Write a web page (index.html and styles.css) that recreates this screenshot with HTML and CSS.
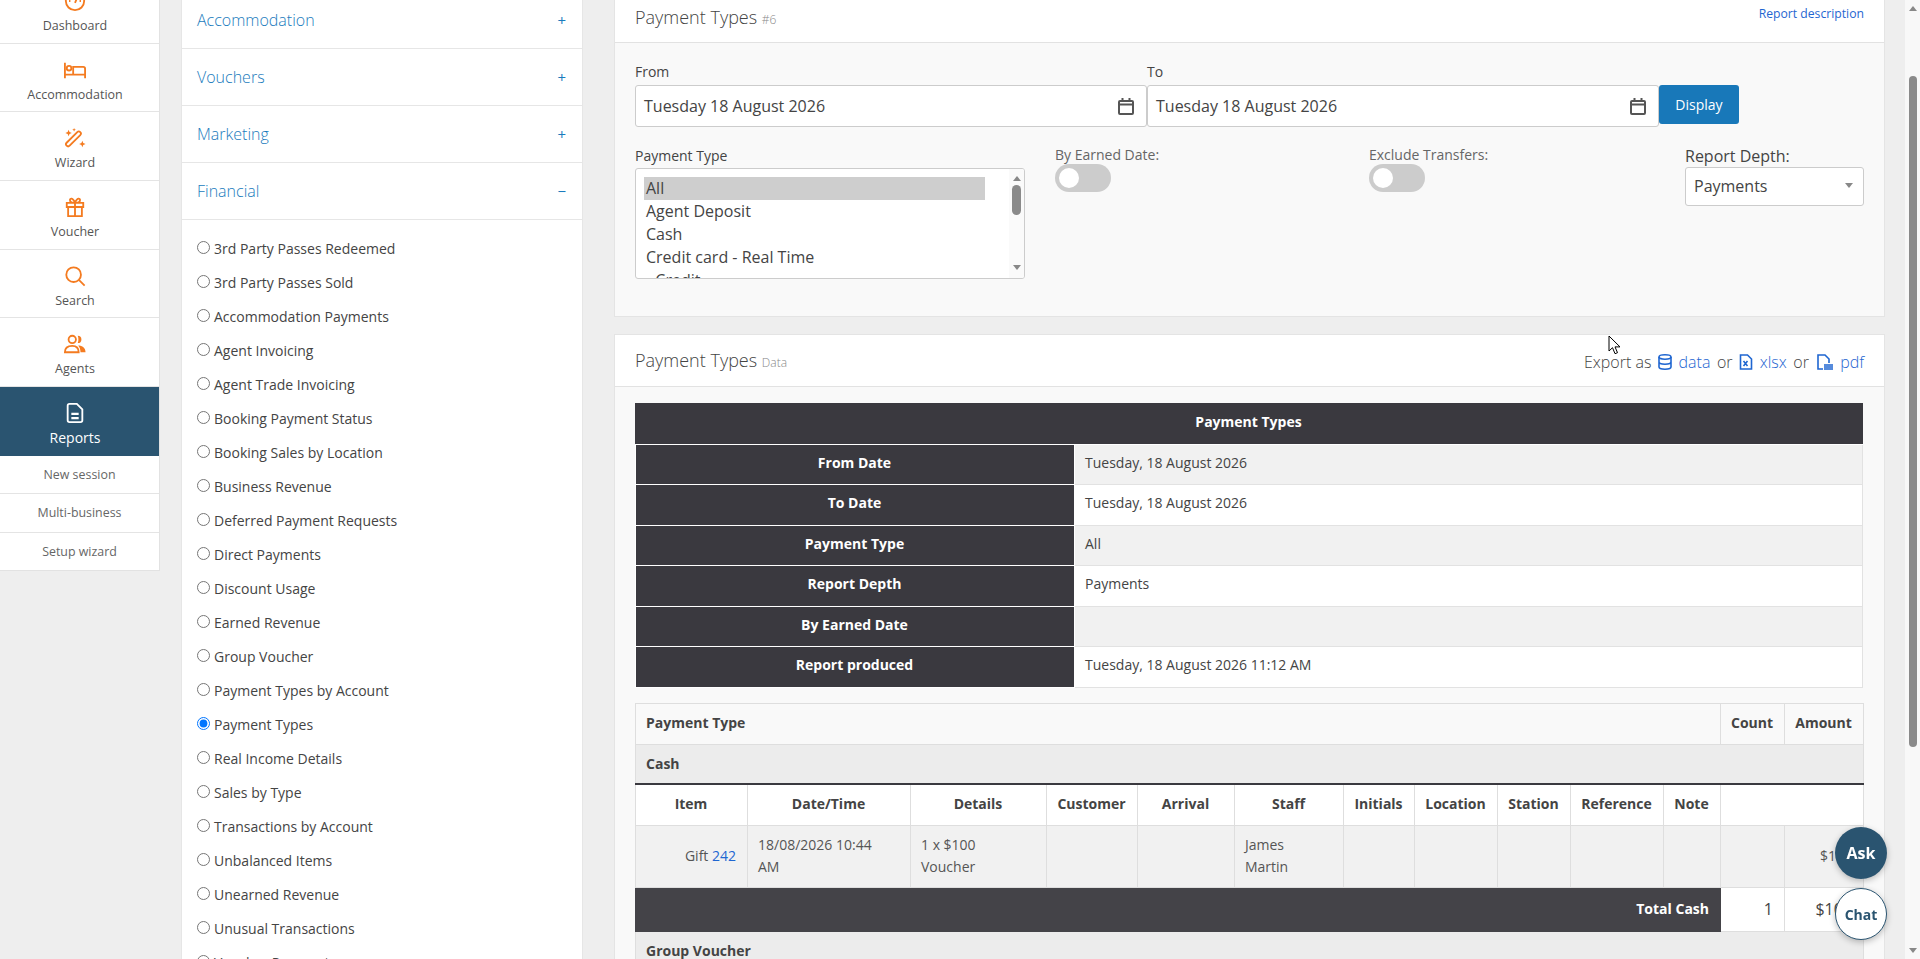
FILE: index.html
```html
<!DOCTYPE html>
<html>
  <head>
    <title>Payment Types Report</title>
    <link rel="stylesheet" href="styles.css">
  </head>
  <body>
    <div class="viewport">
      <div class="page">
        <nav class="sidebar">
          <a class="nav-item">
            <svg class="nav-icon" viewBox="0 0 24 24"><circle cx="12" cy="12" r="10"/><path d="M12 14l3-7M5.500 12h1.500M17 12h1.500"/></svg>
            <span>Dashboard</span>
          </a>
          <a class="nav-item">
            <svg class="nav-icon" viewBox="0 0 24 24"><path d="M1 4v17M1 17h22M23 21V10.500a2 2 0 0 0-2-2H10V17"/><circle cx="5.500" cy="10" r="2.500"/></svg>
            <span>Accommodation</span>
          </a>
          <a class="nav-item">
            <svg class="nav-icon" viewBox="0 0 24 24"><rect x="8" y="2.500" width="4.600" height="21" rx="2.300" transform="rotate(45 10.300 13)"/><path class="solid" d="M5 3l1 2.500 2.500 1-2.500 1L5 10 4 7.500l-2.500-1 2.500-1zM11 1l.6 1.400L13 3l-1.400.6L11 5l-.6-1.400L9 3l1.400-.6zM20 15l1 2.500 2.500 1-2.500 1-1 2.500-1-2.500-2.500-1 2.500-1z"/></svg>
            <span>Wizard</span>
          </a>
          <a class="nav-item">
            <svg class="nav-icon" viewBox="0 0 24 24"><path d="M3 7.500h18v4.500H3zM4.500 12v10h15V12M12 7.500V22M12 7.500C9 7.500 6.500 6.500 6.500 4.300 6.500 2.500 9.500 1.500 12 7.500c2.500-6 5.500-5 5.500-3.200 0 2.200-2.500 3.200-5.500 3.200z"/></svg>
            <span>Voucher</span>
          </a>
          <a class="nav-item">
            <svg class="nav-icon" viewBox="0 0 24 24"><circle cx="10.500" cy="10.500" r="8"/><path d="M16.500 16.500l6 6"/></svg>
            <span>Search</span>
          </a>
          <a class="nav-item">
            <svg class="nav-icon" viewBox="0 0 24 24"><circle cx="9" cy="7" r="4"/><path d="M1 21c0-5 3-7 8-7s7 2 7 7z"/><path class="solid" d="M15 3a4 4 0 0 1 0 8c1-2.500 1-5.500 0-8zM15.500 13.500c4.500 0 8 2.500 8 7.500h-5.500c0-3-.8-5.500-2.500-7.500z"/></svg>
            <span>Agents</span>
          </a>
          <a class="nav-item nav-active">
            <svg class="nav-icon" viewBox="0 0 24 24"><path d="M6 2h8l6 6v12a2 2 0 0 1-2 2H6a2 2 0 0 1-2-2V4a2 2 0 0 1 2-2z"/><path class="thick" d="M8 13h8M8 17.500h8"/></svg>
            <span>Reports</span>
          </a>
          <a class="nav-sub">New session</a>
          <a class="nav-sub">Multi-business</a>
          <a class="nav-sub">Setup wizard</a>
        </nav>

        <section class="report-list">
          <div class="acc-row"><span>Accommodation</span><b>+</b></div>
          <div class="acc-row"><span>Vouchers</span><b>+</b></div>
          <div class="acc-row"><span>Marketing</span><b>+</b></div>
          <div class="acc-row"><span>Financial</span><b>&minus;</b></div>
          <div class="radio-list">
            <label class="radio-row"><input type="radio" name="report">3rd Party Passes Redeemed</label>
            <label class="radio-row"><input type="radio" name="report">3rd Party Passes Sold</label>
            <label class="radio-row"><input type="radio" name="report">Accommodation Payments</label>
            <label class="radio-row"><input type="radio" name="report">Agent Invoicing</label>
            <label class="radio-row"><input type="radio" name="report">Agent Trade Invoicing</label>
            <label class="radio-row"><input type="radio" name="report">Booking Payment Status</label>
            <label class="radio-row"><input type="radio" name="report">Booking Sales by Location</label>
            <label class="radio-row"><input type="radio" name="report">Business Revenue</label>
            <label class="radio-row"><input type="radio" name="report">Deferred Payment Requests</label>
            <label class="radio-row"><input type="radio" name="report">Direct Payments</label>
            <label class="radio-row"><input type="radio" name="report">Discount Usage</label>
            <label class="radio-row"><input type="radio" name="report">Earned Revenue</label>
            <label class="radio-row"><input type="radio" name="report">Group Voucher</label>
            <label class="radio-row"><input type="radio" name="report">Payment Types by Account</label>
            <label class="radio-row"><input type="radio" name="report" checked>Payment Types</label>
            <label class="radio-row"><input type="radio" name="report">Real Income Details</label>
            <label class="radio-row"><input type="radio" name="report">Sales by Type</label>
            <label class="radio-row"><input type="radio" name="report">Transactions by Account</label>
            <label class="radio-row"><input type="radio" name="report">Unbalanced Items</label>
            <label class="radio-row"><input type="radio" name="report">Unearned Revenue</label>
            <label class="radio-row"><input type="radio" name="report">Unusual Transactions</label>
            <label class="radio-row"><input type="radio" name="report">Voucher Payments</label>
          </div>
        </section>

        <main class="main">
          <section class="card">
            <header class="card-head filter-head">
              <h3>Payment Types <small>#6</small></h3>
              <a class="desc-link">Report description</a>
            </header>
            <div class="filter-body">
              <div class="date-row">
                <div class="date-field">
                  <label>From</label>
                  <div class="date-input">
                    <span>Tuesday 18 August 2026</span>
                    <svg class="cal" viewBox="0 0 16 18"><path d="M2 4h12a1 1 0 0 1 1 1v11a1 1 0 0 1-1 1H2a1 1 0 0 1-1-1V5a1 1 0 0 1 1-1zM1 7.500h14M4.500 1v3M11.500 1v3"/></svg>
                  </div>
                </div>
                <div class="date-field">
                  <label>To</label>
                  <div class="date-input">
                    <span>Tuesday 18 August 2026</span>
                    <svg class="cal" viewBox="0 0 16 18"><path d="M2 4h12a1 1 0 0 1 1 1v11a1 1 0 0 1-1 1H2a1 1 0 0 1-1-1V5a1 1 0 0 1 1-1zM1 7.500h14M4.500 1v3M11.500 1v3"/></svg>
                  </div>
                </div>
                <button class="btn-display">Display</button>
              </div>
              <div class="option-row">
                <div>
                  <label class="list-label">Payment Type</label>
                  <div class="listbox">
                    <div class="list-options">
                      <div class="opt opt-selected">All</div>
                      <div class="opt">Agent Deposit</div>
                      <div class="opt">Cash</div>
                      <div class="opt">Credit card - Real Time</div>
                      <div class="opt">- Credit</div>
                    </div>
                    <div class="list-scroll">
                      <i class="arrow-up"></i>
                      <i class="list-thumb"></i>
                      <i class="arrow-down"></i>
                    </div>
                  </div>
                </div>
                <div>
                  <label class="switch-label">By Earned Date:</label>
                  <div class="switch"><i></i></div>
                </div>
                <div>
                  <label class="switch-label">Exclude Transfers:</label>
                  <div class="switch"><i></i></div>
                </div>
                <div>
                  <label class="depth-label">Report Depth:</label>
                  <div class="depth-select"><span>Payments</span><i class="arrow-down"></i></div>
                </div>
              </div>
            </div>
          </section>

          <section class="card card-data">
            <header class="card-head data-head">
              <h3>Payment Types <small>Data</small></h3>
              <div class="export">
                <span>Export as</span>
                <svg class="exp-icon" viewBox="0 0 14 16"><ellipse cx="7" cy="3" rx="6" ry="2.200"/><path d="M1 3v10c0 1.200 2.700 2.200 6 2.200s6-1 6-2.200V3M1 8c0 1.200 2.700 2.200 6 2.200s6-1 6-2.200"/></svg>
                <a>data</a>
                <span>or</span>
                <svg class="exp-icon" viewBox="0 0 14 16"><path d="M1.500 1h7l4 4v10h-11zM4.500 7l4 5M8.500 7l-4 5"/></svg>
                <a>xlsx</a>
                <span>or</span>
                <svg class="exp-icon exp-wide" viewBox="0 0 18 16"><path d="M7 15H2V1h7l4 4v4"/><path class="thick" d="M8 11h9M8 13h9M8 15h9"/></svg>
                <a>pdf</a>
              </div>
            </header>
            <div class="data-body">
              <table class="meta-table">
                <colgroup><col class="c-label"><col></colgroup>
                <tr><th colspan="2">Payment Types</th></tr>
                <tr><th>From Date</th><td>Tuesday, 18 August 2026</td></tr>
                <tr><th>To Date</th><td>Tuesday, 18 August 2026</td></tr>
                <tr><th>Payment Type</th><td>All</td></tr>
                <tr><th>Report Depth</th><td>Payments</td></tr>
                <tr><th>By Earned Date</th><td></td></tr>
                <tr><th>Report produced</th><td>Tuesday, 18 August 2026 11:12 AM</td></tr>
              </table>

              <table class="pay-table">
                <colgroup>
                  <col class="c-item"><col class="c-date"><col class="c-details"><col class="c-customer">
                  <col class="c-arrival"><col class="c-staff"><col class="c-initials"><col class="c-location">
                  <col class="c-station"><col class="c-reference"><col class="c-note"><col class="c-count"><col class="c-amount">
                </colgroup>
                <tr class="head-row">
                  <th colspan="11" class="left">Payment Type</th>
                  <th>Count</th>
                  <th>Amount</th>
                </tr>
                <tr class="group-row"><th colspan="13" class="left">Cash</th></tr>
                <tr class="sub-head">
                  <th>Item</th><th>Date/Time</th><th>Details</th><th>Customer</th><th>Arrival</th><th>Staff</th>
                  <th>Initials</th><th>Location</th><th>Station</th><th>Reference</th><th>Note</th><th colspan="2"></th>
                </tr>
                <tr class="data-row">
                  <td class="right">Gift <a>242</a></td>
                  <td>18/08/2026 10:44<br>AM</td>
                  <td>1 x $100<br>Voucher</td>
                  <td></td><td></td>
                  <td>James<br>Martin</td>
                  <td></td><td></td><td></td><td></td><td></td><td></td>
                  <td class="right">$100</td>
                </tr>
                <tr class="total-row">
                  <th colspan="11">Total Cash</th>
                  <td>1</td>
                  <td>$100</td>
                </tr>
                <tr class="group-row"><th colspan="13" class="left">Group Voucher</th></tr>
              </table>
            </div>
          </section>
        </main>
      </div>

      <div class="page-scroll">
        <i class="arrow-up"></i>
        <i class="page-thumb"></i>
        <i class="arrow-down"></i>
      </div>
    </div>

    <button class="float-btn float-ask">Ask</button>
    <button class="float-btn float-chat">Chat</button>
    <svg class="mouse" viewBox="0 0 13 20"><path d="M1 1v15l3.500-3.300 2.500 6 2.500-1-2.500-5.800h5z"/></svg>
  </body>
</html>
```

FILE: styles.css
```css
* {
  box-sizing: border-box;
}

html,
body {
  height: 100%;
  margin: 0;
  overflow: hidden;
}

body {
  font-family: "Open Sans", "Noto Sans", sans-serif;
  font-size: 14px;
  color: #444;
  background-color: #eee;
}

a {
  color: #1f66d1;
}

.viewport {
  display: flex;
  height: 959px;
  overflow: hidden;
}

/* page is scrolled a little, same as in the real app */
.page {
  display: flex;
  align-items: flex-start;
  flex: 1;
  min-width: 0;
  margin-top: -25px;
}

/* left nav */
.sidebar {
  flex: 0 0 160px;
  background-color: #fff;
  border-right: 1px solid #e2e2e2;
  border-bottom: 1px solid #e2e2e2;
}

.nav-item {
  display: flex;
  flex-direction: column;
  align-items: center;
  height: 68.7px;
  padding: 15px 9px 0 0;
  font-size: 12.5px;
  line-height: 18px;
  color: #555;
  border-bottom: 1px solid #e4e4e4;
}

.nav-icon {
  width: 22px;
  height: 22px;
  margin-bottom: 5px;
  fill: none;
  stroke: #f47b20;
  stroke-width: 2;
}

.nav-icon .solid {
  fill: #f47b20;
  stroke: none;
}

.nav-active {
  height: 69px;
  font-size: 14px;
  color: #fff;
  background-color: #2a5470;
  border-bottom: 0;
}

.nav-active .nav-icon {
  stroke: #fff;
}

.nav-active .thick {
  stroke-width: 2.5;
}

.nav-sub {
  display: block;
  height: 38.3px;
  font-size: 12.4px;
  line-height: 38px;
  text-align: center;
  color: #666;
  border-bottom: 1px solid #e4e4e4;
}

.nav-sub:last-child {
  height: 37px;
  line-height: 37px;
  border-bottom: 0;
}

/* report picker */
.report-list {
  flex: 0 0 402px;
  margin: 17px 0 0 21px;
  background-color: #fff;
  border-left: 1px solid #e6e6e6;
  border-right: 1px solid #e6e6e6;
}

.acc-row {
  display: flex;
  justify-content: space-between;
  align-items: center;
  height: 57px;
  padding: 0 16px 0 15px;
  font-size: 16px;
  font-weight: 300;
  color: #1a7bbd;
  border-bottom: 1px solid #e6e6e6;
}

.acc-row b {
  font-size: 15px;
  font-weight: 400;
}

.radio-list {
  padding-top: 11px;
}

.radio-row {
  display: flex;
  align-items: center;
  gap: 4px;
  height: 34px;
  padding-left: 15px;
  font-size: 14px;
}

.radio-row input {
  width: 13px;
  height: 13px;
  margin: -1px 0 0 0;
}

/* right column */
.main {
  flex: 0 0 1270px;
  margin-left: 31px;
}

.card {
  background-color: #f9f9f9;
  border: 1px solid #e4e4e4;
}

.card-data {
  margin-top: 17px;
}

.card-head {
  display: flex;
  justify-content: space-between;
  padding: 0 20px;
  background-color: #fff;
  border-bottom: 1px solid #e2e2e2;
}

.card-head h3 {
  margin: 0;
  font-size: 18px;
  font-weight: 300;
  color: #444;
}

.card-head small {
  font-size: 12px;
  color: #888;
}

.filter-head {
  height: 67px;
  padding-top: 28px;
}

.filter-head h3 {
  line-height: 26px;
}

.desc-link {
  font-size: 12.2px;
  line-height: 20px;
}

.filter-body {
  height: 273px;
  padding: 18px 20px 0;
}

.date-row {
  display: flex;
  align-items: flex-start;
}

.date-field {
  flex: 0 0 512px;
}

.date-field label {
  display: block;
  height: 24px;
  line-height: 21px;
}

.date-input {
  display: flex;
  justify-content: space-between;
  align-items: center;
  height: 42px;
  padding: 0 12px 0 8px;
  font-size: 16px;
  background-color: #fff;
  border: 1px solid #ccc;
  border-radius: 3px;
}

.cal {
  width: 16px;
  height: 18px;
  fill: none;
  stroke: #555;
  stroke-width: 2;
}

.btn-display {
  width: 80px;
  height: 39px;
  margin-top: 24px;
  padding: 0;
  font-family: inherit;
  font-size: 14px;
  color: #fff;
  background-color: #1878b9;
  border: 0;
  border-radius: 3px;
}

.option-row {
  display: grid;
  grid-template-columns: 420px 314px 316px 179px;
  margin-top: 19px;
}

.list-label {
  display: block;
  height: 22px;
  line-height: 20px;
}

.listbox {
  display: flex;
  justify-content: space-between;
  width: 390px;
  height: 111px;
  overflow: hidden;
  background-color: #fff;
  border: 1px solid #ccc;
  border-radius: 3px;
}

.list-options {
  width: 341px;
  margin: 8px 0 0 8px;
  font-size: 16px;
  line-height: 23px;
}

.opt {
  padding-left: 2px;
}

.opt-selected {
  background-color: #cecece;
}

.list-scroll {
  display: flex;
  flex-direction: column;
  align-items: center;
  width: 15px;
  padding-top: 7px;
  background-color: #fafafa;
}

.list-thumb {
  width: 9px;
  height: 30px;
  margin-top: 4px;
  background-color: #8a8a8a;
  border-radius: 5px;
}

.list-scroll .arrow-down {
  margin-top: auto;
  margin-bottom: 8px;
}

.arrow-up,
.arrow-down {
  display: block;
  width: 0;
  height: 0;
  border-left: 4px solid transparent;
  border-right: 4px solid transparent;
}

.arrow-up {
  border-bottom: 5px solid #888;
}

.arrow-down {
  border-top: 5px solid #888;
}

.switch-label {
  display: block;
  height: 18px;
  font-size: 14px;
  line-height: 18px;
  color: #666;
}

.switch {
  width: 56px;
  height: 28px;
  padding: 4px;
  background-color: #ccc;
  border-radius: 14px;
}

.switch i {
  display: block;
  width: 20px;
  height: 20px;
  background-color: #fff;
  border-radius: 50%;
}

.depth-label {
  display: block;
  height: 21px;
  font-size: 16px;
  line-height: 20px;
}

.depth-select {
  display: flex;
  justify-content: space-between;
  align-items: center;
  height: 39px;
  padding: 0 10px 2px 8px;
  font-size: 16px;
  background-color: #fff;
  border: 1px solid #ccc;
  border-radius: 3px;
}

.data-head {
  height: 52px;
  align-items: center;
}

.data-head h3 {
  margin-bottom: 2px;
}

.export {
  display: flex;
  align-items: center;
  gap: 6.6px;
  margin-top: 2px;
  font-size: 16px;
  font-weight: 300;
}

.exp-icon {
  width: 14px;
  height: 16px;
  fill: none;
  stroke: #1f66d1;
  stroke-width: 1.6;
}

.exp-wide {
  width: 18px;
}

.data-body {
  padding: 16px 20px 0;
}

/* report tables */
table {
  width: 1228px;
  border-collapse: collapse;
  table-layout: fixed;
}

.c-label { width: 439px; }

.meta-table th,
.meta-table td {
  height: 40.5px;
  padding: 0 11px 4px 10px;
  border: 1px solid #e2e2e2;
}

.meta-table th {
  color: #fff;
  background-color: #3a393f;
  border-color: #fff;
}

.meta-table tr:first-child th {
  border-color: #3a393f;
  border-bottom-color: #fff;
}

.meta-table td {
  background-color: #fff;
}

.meta-table tr:nth-child(even) td {
  background-color: #f1f1f1;
}

.pay-table {
  margin-top: 15px;
}

.c-item { width: 112px; }
.c-date { width: 163px; }
.c-details { width: 136px; }
.c-customer { width: 91px; }
.c-arrival { width: 97px; }
.c-staff { width: 109px; }
.c-initials { width: 71px; }
.c-location { width: 83px; }
.c-station { width: 73px; }
.c-reference { width: 93px; }
.c-note { width: 57px; }
.c-count { width: 64px; }
.c-amount { width: 79px; }

.pay-table th,
.pay-table td {
  padding: 0 11px 0 10px;
  border: 1px solid #dedede;
}

.pay-table .left {
  text-align: left;
}

.pay-table .right {
  text-align: right;
}

.head-row th {
  height: 41px;
  padding-bottom: 2px;
  background-color: #f9f9f9;
}

.group-row th {
  height: 40px;
  background-color: #ececec;
  border-bottom: 2px solid #3a393f;
}

.sub-head th {
  height: 41px;
  padding-bottom: 2px;
  background-color: #fff;
}

.data-row td {
  height: 62px;
  line-height: 22px;
  color: #555;
  background-color: #f1f1f1;
}

.total-row th {
  height: 44px;
  padding-bottom: 2px;
  text-align: right;
  color: #fff;
  background-color: #444348;
  border-color: #444348;
}

.total-row td {
  font-size: 16px;
  text-align: right;
  background-color: #fff;
}

/* fake window scrollbar */
.page-scroll {
  display: flex;
  flex-direction: column;
  align-items: center;
  flex: 0 0 15px;
  padding: 6px 0;
  background-color: #f8f8f8;
}

.page-thumb {
  width: 8px;
  height: 671px;
  margin-top: 65px;
  background-color: #8a8a8a;
  border-radius: 5px;
}

.page-scroll .arrow-down {
  margin-top: auto;
}

/* floating helpers */
.float-btn {
  position: fixed;
  right: 33px;
  width: 52px;
  height: 52px;
  padding: 0;
  font-family: inherit;
  font-weight: 700;
  border-radius: 50%;
  box-shadow: 0 2px 6px rgba(0, 0, 0, 0.25);
}

.float-ask {
  top: 827px;
  font-size: 16px;
  color: #fff;
  background-color: #2a5470;
  border: 0;
}

.float-chat {
  top: 888px;
  font-size: 14px;
  color: #2a5470;
  background-color: #fff;
  border: 1px solid #2a5470;
}

.mouse {
  position: fixed;
  top: 335px;
  left: 1608px;
  width: 13px;
  height: 20px;
  fill: #fff;
  stroke: #000;
  stroke-width: 1;
}
```
